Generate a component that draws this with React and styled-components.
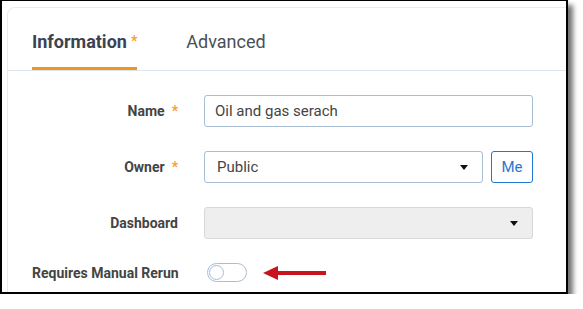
import React from "react";
import styled, { createGlobalStyle } from "styled-components";

const GlobalStyle = createGlobalStyle`
  html, body {
    margin: 0;
    padding: 0;
    background: #ffffff;
    font-family: Roboto, "Liberation Sans", Arial, sans-serif;
  }
`;

const Frame = styled.div`
  box-sizing: border-box;
  width: 568px;
  height: 294px;
  border-style: solid;
  border-color: #000;
  border-width: 1px 2px 2px 2px;
  box-shadow: 5px 5px 5px rgba(0, 0, 0, 0.55);
  overflow: hidden;
  background: #fff;
`;

const Card = styled.div`
  margin: 6px 0 0 5px;
  width: 640px;
  height: 320px;
  border: 1px solid #ebebeb;
  border-radius: 8px;
  background: #fff;
`;

const TabBar = styled.div`
  display: flex;
  align-items: flex-end;
  gap: 49px;
  padding: 0 24px;
  border-bottom: 1px solid #dde6ee;
`;

const Tab = styled.div`
  height: 22px;
  padding: 23px 0 14px;
  line-height: 22px;
  font-size: 18px;
  font-weight: ${(p) => (p.$active ? 700 : 400)};
  color: ${(p) => (p.$active ? "#3c4350" : "#4a4f57")};
  border-bottom: 3px solid ${(p) => (p.$active ? "#f39322" : "transparent")};
`;

const TabStar = styled.span`
  position: relative;
  top: -2px;
  line-height: 0;
  color: #f7a12e;
  font-size: 14px;
  margin-left: 4px;
`;

const Form = styled.div`
  display: grid;
  grid-template-columns: 146px 329px;
  column-gap: 26px;
  row-gap: 24px;
  align-items: center;
  padding: 24px 24px 0;
`;

const Label = styled.div`
  text-align: right;
  font-size: 14px;
  font-weight: 700;
  color: #444;
  white-space: nowrap;
`;

const Req = styled.span`
  color: #f7a12e;
  margin-left: 7px;
`;

const Input = styled.div`
  box-sizing: border-box;
  height: 32px;
  display: flex;
  align-items: center;
  padding: 0 10px;
  border: 1px solid #a9bdd5;
  border-radius: 3px;
  font-size: 15px;
  color: #444;
  background: #fff;
`;

const Select = styled(Input)`
  flex: 1;
  justify-content: space-between;
  padding: 0 14px 0 12px;
  background: ${(p) => (p.$disabled ? "#eeeeee" : "#fff")};
  border-color: ${(p) => (p.$disabled ? "#d8d8d8" : "#a9bdd5")};
`;

const Caret = styled.span`
  width: 0;
  height: 0;
  border-left: 4px solid transparent;
  border-right: 4px solid transparent;
  border-top: 5px solid #111;
`;

const Row = styled.div`
  display: flex;
  gap: 8px;
`;

const MeButton = styled.button`
  box-sizing: border-box;
  width: 42px;
  height: 32px;
  border: 1px solid #1f78d1;
  border-radius: 3px;
  background: #fff;
  color: #1f78d1;
  font-family: inherit;
  font-size: 15px;
  padding: 0;
`;

const ToggleRow = styled.div`
  display: flex;
  align-items: center;
  gap: 16px;
  padding-left: 3px;
`;

const Toggle = styled.div`
  box-sizing: border-box;
  width: 40px;
  height: 19px;
  border: 1px solid #a9bdd5;
  border-radius: 10px;
  display: flex;
  align-items: center;
  padding: 0 1px;
`;

const Knob = styled.div`
  box-sizing: border-box;
  width: 15px;
  height: 15px;
  border-radius: 50%;
  border: 1px solid #a9bdd5;
  background: #fff;
`;

function Arrow() {
  return (
    <svg width="63" height="16" viewBox="0 0 63 16">
      <polygon points="0,8 15,1 15,15" fill="#c8151d" />
      <rect x="14" y="6" width="49" height="4" fill="#c8151d" />
    </svg>
  );
}

export default function App() {
  return (
    <>
      <GlobalStyle />
      <Frame>
        <Card>
          <TabBar>
            <Tab $active>
              Information<TabStar>*</TabStar>
            </Tab>
            <Tab>Advanced</Tab>
          </TabBar>
          <Form>
            <Label>
              Name<Req>*</Req>
            </Label>
            <Input>Oil and gas serach</Input>

            <Label>
              Owner<Req>*</Req>
            </Label>
            <Row>
              <Select>
                Public
                <Caret />
              </Select>
              <MeButton>Me</MeButton>
            </Row>

            <Label>Dashboard</Label>
            <Select $disabled>
              <span />
              <Caret />
            </Select>

            <Label>Requires Manual Rerun</Label>
            <ToggleRow>
              <Toggle>
                <Knob />
              </Toggle>
              <Arrow />
            </ToggleRow>
          </Form>
        </Card>
      </Frame>
    </>
  );
}
